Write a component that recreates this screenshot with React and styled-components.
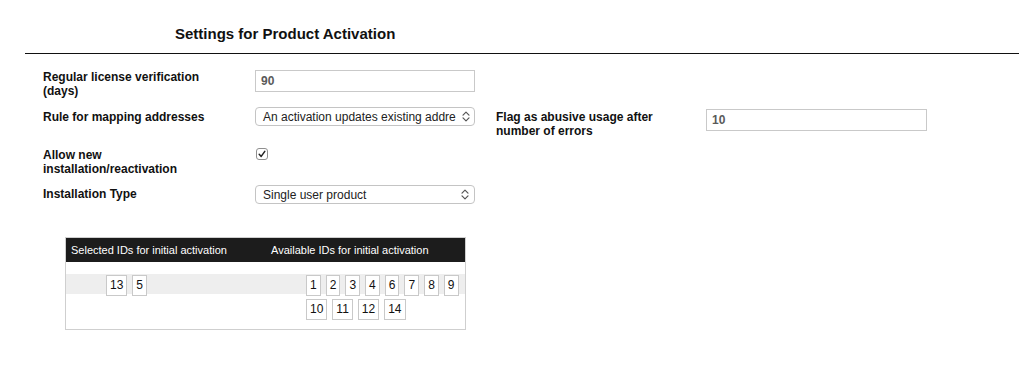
import React from "react";
import styled, { createGlobalStyle } from "styled-components";

const GlobalStyle = createGlobalStyle`
  body {
    margin: 0;
    background: #fff;
    font-family: "Liberation Sans", Arial, Helvetica, sans-serif;
    color: #111;
  }
`;

const Page = styled.div`
  width: 1019px;
  min-height: 371px;
`;

const Header = styled.div`
  padding: 25px 0 0 175px;
`;

const Title = styled.h1`
  margin: 0;
  font-size: 15px;
  line-height: 17px;
  font-weight: bold;
  color: #111;
`;

const Rule = styled.div`
  margin: 11px 0 0 25px;
  height: 1px;
  background: #111;
`;

const Form = styled.div`
  display: grid;
  grid-template-columns: 212px 241px 210px 1fr;
  row-gap: 9px;
  align-items: start;
  padding: 16px 0 0 43px;
`;

const Label = styled.div`
  max-width: 180px;
  font-size: 12px;
  line-height: 14px;
  font-weight: bold;
  padding-top: ${(p) => p.$offset ?? 2}px;
`;

const TextInput = styled.div`
  box-sizing: border-box;
  width: ${(p) => p.$width || 220}px;
  height: 22px;
  margin-top: ${(p) => p.$offset || 0}px;
  border: 1px solid #c9c9c9;
  padding-left: 5px;
  font-size: 12px;
  line-height: 20px;
  font-weight: bold;
  color: #5a5a5a;
`;

const Select = styled.div`
  box-sizing: border-box;
  display: flex;
  align-items: center;
  width: 220px;
  height: 19px;
  border: 1px solid #c4c4c4;
  border-radius: 4px;
  padding-left: 7px;
  font-size: 12px;
  color: #222;
  background: #fff;
`;

const SelectText = styled.span`
  flex: 1;
  white-space: nowrap;
  margin-right: 6px;
`;

const Chevron = styled.svg`
  flex: none;
  margin-right: 5px;
`;

const Checkbox = styled.span`
  box-sizing: border-box;
  display: flex;
  align-items: center;
  justify-content: center;
  width: 12px;
  height: 12px;
  margin: 1px 0 0 1px;
  border: 1px solid #8f8f8f;
  border-radius: 3px;
  background: #fff;
`;

const Table = styled.div`
  width: 401px;
  box-sizing: border-box;
  margin: 33px 0 0 65px;
  border: 1px solid #cfcfcf;
`;

const HeadRow = styled.div`
  display: grid;
  grid-template-columns: 200px 1fr;
  height: 24px;
  align-items: center;
  background: #1c1c1c;
  color: #fff;
  font-size: 11px;
`;

const HeadCell = styled.div`
  padding-left: 5px;
`;

const Body = styled.div`
  display: grid;
  grid-template-columns: 200px 1fr;
  padding: 13px 0 9px;
  background: linear-gradient(
    to bottom,
    transparent 12px,
    #eeeeee 12px,
    #eeeeee 32px,
    transparent 32px
  );
`;

const IdList = styled.ul`
  display: flex;
  flex-wrap: wrap;
  align-content: flex-start;
  gap: 3px 5px;
  margin: 0;
  padding: 0 0 0 40px;
  list-style: none;
`;

const IdChip = styled.li`
  box-sizing: border-box;
  height: 21px;
  padding: 0 3px;
  border: 1px solid #c9c9c9;
  background: #fff;
  font-size: 12px;
  line-height: 19px;
  color: #111;
`;

const UpDown = () => (
  <Chevron width="8" height="11" viewBox="0 0 8 11">
    <path
      d="M1 4.2 L4 1.2 L7 4.2 M1 6.8 L4 9.8 L7 6.8"
      fill="none"
      stroke="#555"
      strokeWidth="1.2"
      strokeLinecap="round"
      strokeLinejoin="round"
    />
  </Chevron>
);

const selectedIds = [13, 5];
const availableIds = [1, 2, 3, 4, 6, 7, 8, 9, 10, 11, 12, 14];

const App = () => {
  return (
    <Page>
      <GlobalStyle />
      <Header>
        <Title>Settings for Product Activation</Title>
      </Header>
      <Rule />

      <Form>
        <Label $offset={0}>Regular license verification (days)</Label>
        <TextInput>90</TextInput>
        <div />
        <div />

        <Label $offset={3}>Rule for mapping addresses</Label>
        <Select>
          <SelectText>An activation updates existing addre</SelectText>
          <UpDown />
        </Select>
        <Label $offset={3}>Flag as abusive usage after number of errors</Label>
        <TextInput $width={221} $offset={2}>
          10
        </TextInput>

        <Label $offset={1}>Allow new installation/reactivation</Label>
        <Checkbox>
          <svg width="8" height="8" viewBox="0 0 8 8">
            <path
              d="M1.2 4.2 L3.2 6.4 L6.8 1.4"
              fill="none"
              stroke="#222"
              strokeWidth="1.5"
              strokeLinecap="round"
              strokeLinejoin="round"
            />
          </svg>
        </Checkbox>
        <div />
        <div />

        <Label>Installation Type</Label>
        <Select>
          <SelectText>Single user product</SelectText>
          <UpDown />
        </Select>
      </Form>

      <Table>
        <HeadRow>
          <HeadCell>Selected IDs for initial activation</HeadCell>
          <HeadCell>Available IDs for initial activation</HeadCell>
        </HeadRow>
        <Body>
          <IdList>
            {selectedIds.map((id) => (
              <IdChip key={id}>{id}</IdChip>
            ))}
          </IdList>
          <IdList>
            {availableIds.map((id) => (
              <IdChip key={id}>{id}</IdChip>
            ))}
          </IdList>
        </Body>
      </Table>
    </Page>
  );
};

export default App;
